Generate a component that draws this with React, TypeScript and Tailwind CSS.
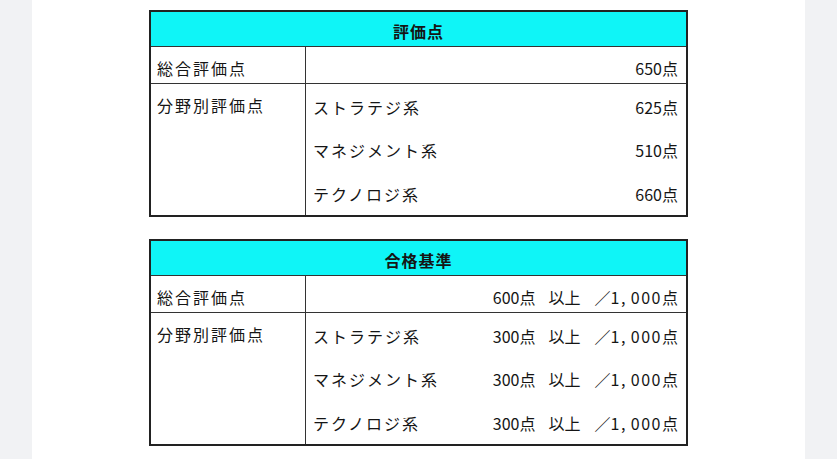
const SUB_FIELDS = ["ストラテジ系", "マネジメント系", "テクノロジ系"];

type ScoreTableProps = {
	title: string;
	total: React.ReactNode;
	fields: React.ReactNode[];
};

function ScoreTable({ title, total, fields }: ScoreTableProps) {
	return (
		<div className="w-[539px] border-2 border-[#222] text-[16px] text-[#151515]">
			{/* Header */}
			<div className="flex h-[35px] items-center justify-center border-b border-[#333] bg-[#0ff5f7] pt-[3px] font-bold tracking-[1px]">
				{title}
			</div>

			{/* Total */}
			<div className="flex h-[37px] border-b border-[#333]">
				<div className="flex w-[155px] shrink-0 items-center border-r border-[#333] pl-[6px] pt-[5px] tracking-[2px]">
					総合評価点
				</div>
				<div className="flex flex-1 items-center justify-end pr-[8px] pt-[5px]">
					{total}
				</div>
			</div>

			{/* Per field */}
			<div className="flex h-[131px]">
				<div className="w-[155px] shrink-0 border-r border-[#333] pl-[6px] pt-[9px] tracking-[2px]">
					分野別評価点
				</div>
				<div className="flex flex-1 flex-col">
					{SUB_FIELDS.map((name, i) => (
						<div
							key={name}
							className="flex h-[43.6px] items-center justify-between pl-[7px] pr-[8px] pt-[2px]"
						>
							<span className="tracking-[2px]">{name}</span>
							<span>{fields[i]}</span>
						</div>
					))}
				</div>
			</div>
		</div>
	);
}

function Criteria({ score }: { score: string }) {
	return (
		<span className="flex items-center">
			<span>{score}点</span>
			<span className="ml-[13px]">以上</span>
			<span className="ml-[14px]">／</span>
			<span className="tracking-[1.5px]">
				1<span className="mr-[4px]">,</span>000
			</span>
			<span>点</span>
		</span>
	);
}

export default function App() {
	return (
		<div
			className="min-h-screen w-full bg-[#f1f2f4]"
			style={{ fontFamily: '"Noto Sans CJK JP", "Noto Sans", sans-serif' }}
		>
			<div className="mx-auto flex min-h-screen w-[773px] flex-col items-center gap-[22px] bg-white pt-[10px]">
				<ScoreTable
					title="評価点"
					total={<span>650点</span>}
					fields={["625点", "510点", "660点"]}
				/>
				<ScoreTable
					title="合格基準"
					total={<Criteria score="600" />}
					fields={[
						<Criteria key="s" score="300" />,
						<Criteria key="m" score="300" />,
						<Criteria key="t" score="300" />,
					]}
				/>
			</div>
		</div>
	);
}
